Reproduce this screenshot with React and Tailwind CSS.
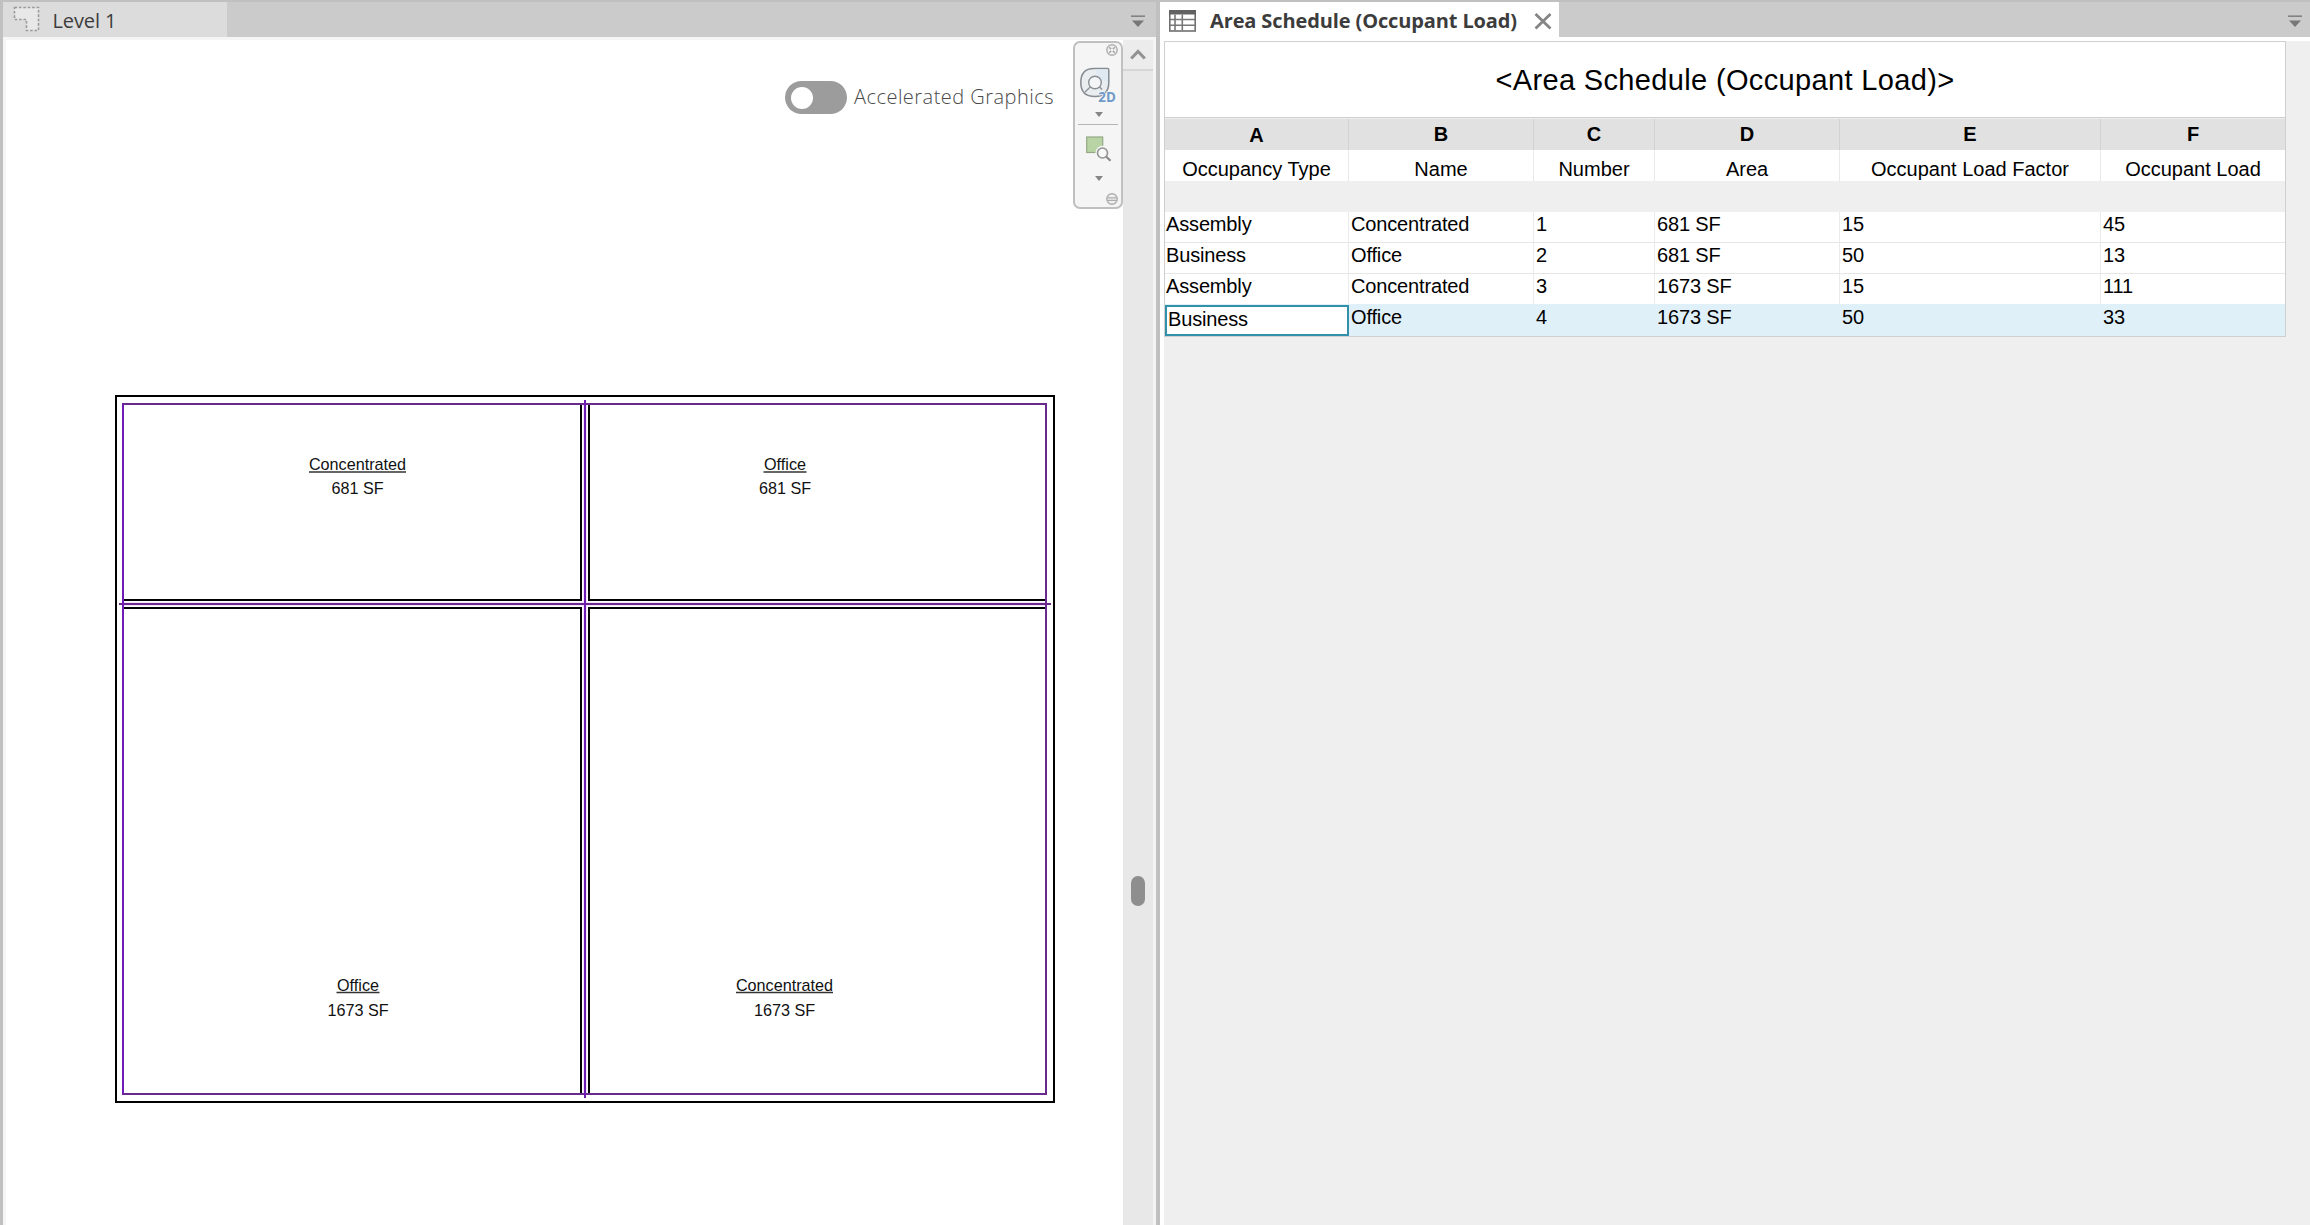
const columns = [
  { letter: "A", title: "Occupancy Type" },
  { letter: "B", title: "Name" },
  { letter: "C", title: "Number" },
  { letter: "D", title: "Area" },
  { letter: "E", title: "Occupant Load Factor" },
  { letter: "F", title: "Occupant Load" },
];

const rows = [
  ["Assembly", "Concentrated", "1", "681 SF", "15", "45"],
  ["Business", "Office", "2", "681 SF", "50", "13"],
  ["Assembly", "Concentrated", "3", "1673 SF", "15", "111"],
  ["Business", "Office", "4", "1673 SF", "50", "33"],
];

const GRID = "grid grid-cols-[184px_185px_121px_185px_261px_184px]";

function TabMenuIcon() {
  return (
    <svg className="mt-1 h-3.5 w-3.5 shrink-0" viewBox="0 0 14 14">
      <path d="M0 1.2h14" stroke="#828282" strokeWidth="1.6" />
      <path d="M1 5.5h12L7 12z" fill="#777" />
    </svg>
  );
}

function AreaPlanIcon() {
  return (
    <svg className="h-[27px] w-[27px] shrink-0" viewBox="0 0 27 27">
      <path d="M1.5 1.5h24v23h-12v-11h-12z" fill="#e8e8e8" stroke="#9a9a9a" strokeWidth="1.6" strokeDasharray="2.6 1.8" />
    </svg>
  );
}

function ScheduleIcon() {
  return (
    <svg className="mt-0.5 h-[22px] w-[27px] shrink-0" viewBox="0 0 27 22">
      <rect x="0.8" y="0.8" width="25.4" height="20.2" fill="#fff" stroke="#707070" strokeWidth="1.6" />
      <path d="M0 0h27v4.500H0z" fill="#626262" />
      <path d="M1 9.500h25M1 15.300h25M6 4.500v16M13.300 4.500v16" stroke="#777" strokeWidth="1.600" />
    </svg>
  );
}

function SmallArrow() {
  return (
    <svg className="h-[5px] w-2" viewBox="0 0 8 5">
      <path d="M0 0h8L4 5z" fill="#858585" />
    </svg>
  );
}

function NavigationBar() {
  return (
    <div className="absolute left-[1070px] top-[4px] flex h-[168px] w-[50px] flex-col items-center rounded-[7px] border-2 border-[#c0c0c0] bg-[#f5f5f5]">
      <svg className="mr-[3px] mt-px h-3 w-3 shrink-0 self-end" viewBox="0 0 12 12">
        <circle cx="6" cy="6" r="5.2" fill="#f0f0f0" stroke="#b0b0b0" strokeWidth="1.4" />
        <path d="M3.2 3.2l5.6 5.6M8.8 3.2L3.2 8.8" stroke="#a8a8a8" strokeWidth="1.6" />
        <circle cx="6" cy="6" r="1.3" fill="#f5f5f5" />
      </svg>
      <svg className="-mr-px mt-[11px] h-[42px] w-[38px] shrink-0 overflow-visible" viewBox="0 0 38 42">
        <path d="M14 1.5H27.5Q28.8 1.5 28.8 3V15Q28.8 29.5 15 29.5Q.8 29.5 .8 15.5Q.8 1.5 14 1.5Z" fill="#e9edf0" stroke="#858b91" strokeWidth="1.5" />
        <path d="M15 2.300H28V15L21 12.500L18 9.500Z" fill="#dfe9f1" />
        <circle cx="15" cy="15.5" r="6.3" fill="#f3f5f6" stroke="#8a9096" strokeWidth="1.4" />
        <path d="M10.5 19.8L5 25M19.5 19.8L22 22.5" stroke="#90959a" strokeWidth="1.5" />
        <text x="18.3" y="35" fontSize="14.5" fontWeight="700" fontFamily="Open Sans, sans-serif" textLength="17.5" lengthAdjust="spacingAndGlyphs" fill="#6f9bc8" stroke="#f5f5f5" strokeWidth="1.5" paintOrder="stroke">2D</text>
      </svg>
      <div className="mt-[3px] flex pl-px">
        <SmallArrow />
      </div>
      <div className="mt-[7px] h-px w-10 shrink-0 bg-[#b4b4b4]" />
      <svg className="ml-[1px] mt-[11px] h-[26px] w-[26px] shrink-0" viewBox="0 0 26 26">
        <rect x="0.7" y="1" width="16" height="15.5" fill="#b9d4a4" stroke="#93a985" strokeWidth="1.2" />
        <circle cx="16.5" cy="17" r="7.2" fill="#f5f5f5" />
        <circle cx="16.5" cy="17" r="5" fill="#f7f9f9" stroke="#929292" strokeWidth="1.6" />
        <path d="M20.3 20.8L24.5 24.8" stroke="#888" strokeWidth="2.2" />
      </svg>
      <div className="mt-[14px] flex pl-px">
        <SmallArrow />
      </div>
      <svg className="mr-[3px] mt-[12px] h-3 w-3 shrink-0 self-end" viewBox="0 0 12 12">
        <circle cx="6" cy="6" r="5.2" fill="#f0f0f0" stroke="#adadad" strokeWidth="1.4" />
        <path d="M1.5 4.8h9M1.5 7.4h9" stroke="#acacac" strokeWidth="1.2" />
      </svg>
    </div>
  );
}

function RoomTag({ x, y, name, area, gap }) {
  return (
    <g fill="#111" fontFamily="Liberation Sans, Arial, sans-serif" fontSize="16.2" textAnchor="middle">
      <text x={x} y={y}>{name}</text>
      <path d={name === "Office" ? `M${x - 21.5} ${y + 2}h43` : `M${x - 48.5} ${y + 2}h97`} stroke="#333" strokeWidth="1.3" />
      <text x={x} y={y + gap}>{area}</text>
    </g>
  );
}

function FloorPlan() {
  return (
    <svg className="ml-[107px] mt-[353px] h-[720px] w-[950px] shrink-0" viewBox="110 390 950 720">
      <g fill="none" stroke="#000" strokeWidth="2">
        <rect x="116" y="396" width="938" height="706" />
        <path d="M123 600H581V404M1046 600H589V404M123 608H581V1094M1046 608H589V1094" />
      </g>
      <g fill="none" strokeWidth="4" stroke="#f5e3fb">
        <path d="M585 405V1093M124 604H1045" />
      </g>
      <g fill="none" stroke="#692a8e" strokeWidth="2">
        <rect x="123" y="404" width="923" height="690" />
        <path d="M119 604H1051" />
        <path d="M585 400V1098M123 404V1094" stroke="#6f1cb4" />
      </g>
      <RoomTag x={357.5} y={470} name="Concentrated" area="681 SF" gap={24} />
      <RoomTag x={785} y={470} name="Office" area="681 SF" gap={24} />
      <RoomTag x={358} y={990.5} name="Office" area="1673 SF" gap={25} />
      <RoomTag x={784.5} y={990.5} name="Concentrated" area="1673 SF" gap={25} />
    </svg>
  );
}

function PlanPane() {
  return (
    <section className="flex w-[1156px] shrink-0 flex-col border-l-[3px] border-[#c0c0c0]">
      <div className="flex h-[35px] shrink-0 items-center justify-between bg-[#cbcbcb] pr-[11px]">
        <div className="flex h-full w-[224px] items-center bg-[#dcdcdc] pl-2.5">
          <AreaPlanIcon />
          <span className="ml-[12.5px] mt-[3px] font-['Open_Sans'] text-[20px] leading-6 tracking-[-0.1px] text-[#3c3c3c]">Level 1</span>
        </div>
        <TabMenuIcon />
      </div>
      <div className="flex min-h-0 flex-1 border-l-[3px] border-t-[3px] border-[#f5f5f5]">
        <div className="relative -ml-[3px] -mt-[3px] w-[1120px] shrink-0">
          <div className="absolute left-[782px] top-[44px] flex items-center">
            <div className="flex h-[33px] w-[62px] items-center rounded-full bg-[#9c9c9c] pl-1.5">
              <div className="h-[22px] w-[22px] rounded-full bg-white" />
            </div>
            <span className="-mt-0.5 ml-[7px] whitespace-nowrap font-['Open_Sans'] text-[20px] font-light leading-6 tracking-[0.47px] text-[#4a4a4a]">Accelerated Graphics</span>
          </div>
          <FloorPlan />
          <NavigationBar />
        </div>
        <div className="flex w-[30px] shrink-0 flex-col items-center bg-[#e8e8e8]">
          <div className="flex h-[31px] w-full justify-center border-b-2 border-[#d6d6d6] bg-[#ececec] pt-[9px]">
            <svg className="h-[11px] w-4" viewBox="0 0 16 11">
              <path d="M1.2 9.5L8 2.5L14.8 9.5" fill="none" stroke="#929292" strokeWidth="3" />
            </svg>
          </div>
          <div className="mt-[805px] h-[30px] w-3.5 rounded-full bg-[#8e8e8e]" />
        </div>
        <div className="flex-1 bg-[#f4f4f4]" />
      </div>
    </section>
  );
}

function ScheduleTable() {
  return (
    <div className="w-[1122px] border border-[#cfcfcf] font-['Liberation_Sans'] text-[20px] leading-6 text-black">
      <h1 className="flex h-[76px] items-center justify-center border-b border-[#cfcfcf] bg-white text-[29px] tracking-[0.35px]">
        &lt;Area Schedule (Occupant Load)&gt;
      </h1>
      <div className={`${GRID} h-8 border-t border-[#eee] bg-[#e1e1e1] text-center font-bold`}>
        {columns.map((c, i) => (
          <div key={c.letter} className={`border-r border-[#d2d2d2] last:border-r-0 ${i === 0 ? "pt-1" : "pt-[3px]"}`}>{c.letter}</div>
        ))}
      </div>
      <div className={`${GRID} h-[31px] bg-white text-center`}>
        {columns.map((c) => (
          <div key={c.letter} className="whitespace-nowrap border-r border-[#e9e9e9] pt-[7px] last:border-r-0">{c.title}</div>
        ))}
      </div>
      <div className="h-[31px] bg-[#efefef]" />
      {rows.map((row, r) => {
        const selected = r === 3;
        const height = selected ? "h-8 bg-[#e0f0f9] pt-px" : r === 2 ? "h-[30px] bg-white" : "h-[31px] border-b border-[#e6e6e6] bg-white";
        return (
          <div key={r} className={`${GRID} ${height} tracking-[-0.15px]`}>
            {row.map((value, c) =>
              selected && c === 0 ? (
                <div key={c} className="h-[31px] border-2 border-[#3190aa] bg-white pl-px">{value}</div>
              ) : (
                <div key={c} className={`${c === 0 ? "pl-px" : "pl-0.5"} ${selected ? "" : "border-r border-[#ebebeb] last:border-r-0"}`}>{value}</div>
              )
            )}
          </div>
        );
      })}
    </div>
  );
}

function SchedulePane() {
  return (
    <section className="flex flex-1 flex-col">
      <div className="flex h-[35px] shrink-0 items-center justify-between bg-[#cbcbcb] pr-2">
        <div className="flex h-full w-[399px] items-center bg-white pl-[9px]">
          <ScheduleIcon />
          <span className="ml-[14px] mt-[3px] w-[310px] whitespace-nowrap font-['Open_Sans'] text-[20px] font-bold leading-6 tracking-[-0.12px] text-[#3c3c3c]">Area Schedule (Occupant Load)</span>
          <svg className="ml-[14px] mt-[3px] h-[18px] w-[18px] shrink-0" viewBox="0 0 18 18">
            <path d="M1.5 2L16.5 16.5M16.5 2L1.5 16.5" stroke="#858585" strokeWidth="2.8" />
          </svg>
        </div>
        <TabMenuIcon />
      </div>
      <div className="flex-1 border-l-4 border-t-4 border-white bg-[#efefef]">
        <ScheduleTable />
      </div>
    </section>
  );
}

export default function App() {
  return (
    <main className="flex h-[1225px] w-[2310px] overflow-hidden border-t-2 border-[#c0c0c0] bg-white">
      <PlanPane />
      <div className="w-1 shrink-0 bg-[#c0c0c0]" />
      <SchedulePane />
    </main>
  );
}
